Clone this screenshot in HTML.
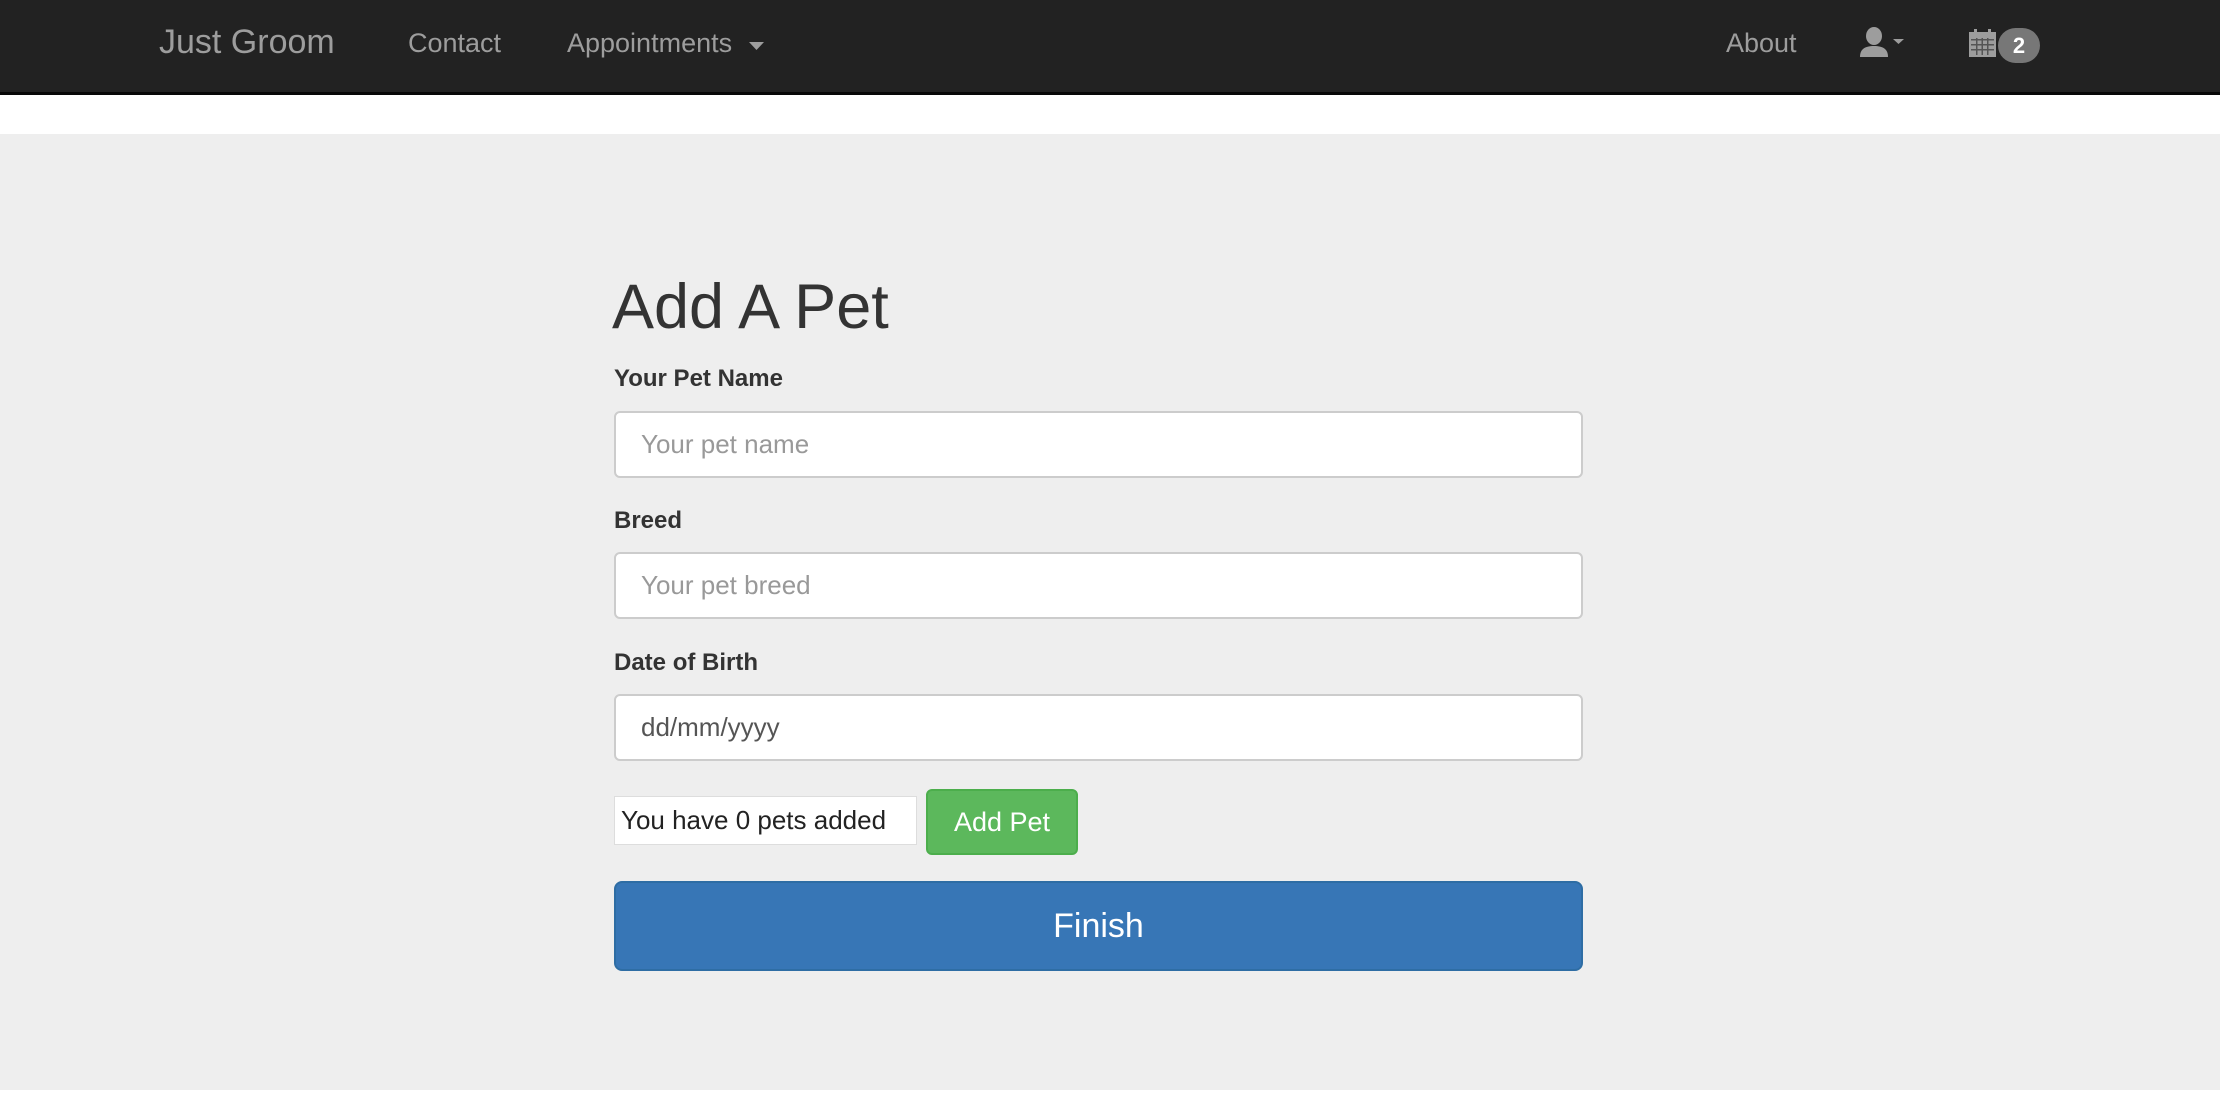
<!DOCTYPE html>
<html><head><meta charset="utf-8"><style>
*{box-sizing:border-box;margin:0;padding:0}
body{width:2220px;height:1104px;background:#fff;font-family:"Liberation Sans",Arial,sans-serif;position:relative;overflow:hidden}
.nav{position:absolute;left:0;top:0;width:2220px;height:95px;background:#222;border-bottom:3px solid #080808}
.nav span{position:absolute;color:#9d9d9d;white-space:nowrap}
.main{position:absolute;left:0;top:134px;width:2220px;height:956px;background:#eee}
.abs{position:absolute}
h1{position:absolute;left:612px;top:272px;font-size:63px;font-weight:500;color:#333;line-height:70px}
label{position:absolute;left:614px;font-size:24px;font-weight:bold;color:#333}
.inp{position:absolute;left:614px;width:969px;height:67px;background:#fff;border:2px solid #ccc;border-radius:6px;font-size:26px;color:#999;padding-left:25px;line-height:63px}
</style></head><body>
<div class="nav">
<span style="left:159px;top:23px;font-size:34px">Just Groom</span>
<span style="left:408px;top:28px;font-size:27px">Contact</span>
<span style="left:567px;top:28px;font-size:27px">Appointments</span>
<svg class="abs" style="left:749px;top:42px" width="15" height="8"><path d="M0 0H15L7.5 8Z" fill="#9d9d9d"/></svg>
<span style="left:1726px;top:28px;font-size:27px">About</span>
<svg class="abs" style="left:1859px;top:27px" width="50" height="31" viewBox="0 0 50 31"><ellipse cx="15" cy="9" rx="8" ry="9" fill="#9d9d9d"/><path d="M1 30C1 22 6 19 15 19S29 22 29 30Z" fill="#9d9d9d"/><path d="M34 12H45L39.5 17Z" fill="#9d9d9d"/></svg>
<svg class="abs" style="left:1969px;top:29px" width="27" height="28" viewBox="0 0 27 28"><rect x="0" y="3" width="27" height="25" fill="#9d9d9d"/><rect x="5" y="0" width="3" height="5" fill="#9d9d9d"/><rect x="19" y="0" width="3" height="5" fill="#9d9d9d"/><g fill="#555"><rect x="2" y="10" width="23" height="1.5"/><rect x="2" y="15" width="23" height="1.5"/><rect x="2" y="20" width="23" height="1.5"/><rect x="7" y="9" width="1.5" height="17"/><rect x="12.5" y="9" width="1.5" height="17"/><rect x="18" y="9" width="1.5" height="17"/></g></svg>
<div class="abs" style="left:1998px;top:28px;width:42px;height:35px;border-radius:18px;background:#777;color:#fff;font-weight:bold;font-size:22px;text-align:center;line-height:35px">2</div>
</div>
<div class="main"></div>
<h1>Add A Pet</h1>
<label style="top:365px">Your Pet Name</label>
<div class="inp" style="top:411px">Your pet name</div>
<label style="top:507px">Breed</label>
<div class="inp" style="top:552px">Your pet breed</div>
<label style="top:649px">Date of Birth</label>
<div class="inp" style="top:694px;color:#555">dd/mm/yyyy</div>
<div class="abs" style="left:614px;top:796px;width:303px;height:49px;background:#fff;border:1px solid #ddd;font-size:26px;color:#222;line-height:47px;padding-left:6px">You have 0 pets added</div>
<div class="abs" style="left:926px;top:789px;width:152px;height:66px;background:#5cb85c;border:2px solid #4cae4c;border-radius:6px;color:#fff;font-size:27px;text-align:center;line-height:62px">Add Pet</div>
<div class="abs" style="left:614px;top:881px;width:969px;height:90px;background:#3776b6;border:2px solid #2e6da4;border-radius:8px;color:#fff;font-size:34px;text-align:center;line-height:86px">Finish</div>
</body></html>
